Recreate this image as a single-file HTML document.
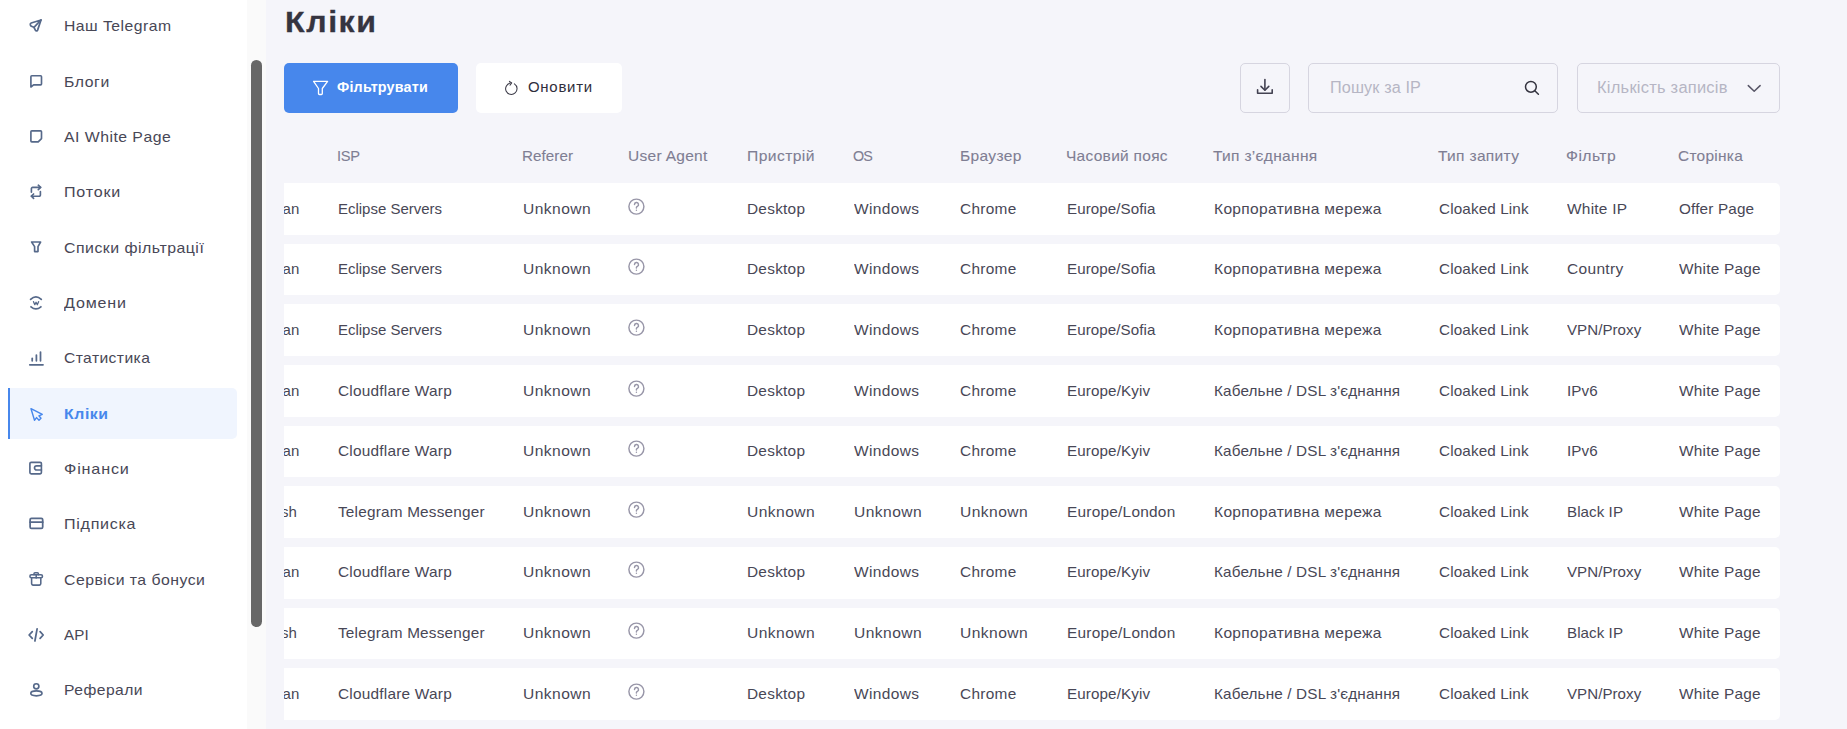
<!DOCTYPE html>
<html><head><meta charset="utf-8"><style>
html,body{margin:0;padding:0}
body{width:1847px;height:729px;overflow:hidden;position:relative;background:#f5f5fa;font-family:"Liberation Sans", sans-serif}
.t{position:absolute;white-space:nowrap;transform-origin:0 50%}
.bx{position:absolute;border-radius:5px}
.bd{border:1px solid #d6d5e0}
#side{position:absolute;left:0;top:0;width:247px;height:729px;background:#fff}
#track{position:absolute;left:247px;top:0;width:19px;height:729px;background:#fafafa}
#thumb{position:absolute;left:4px;top:60px;width:11px;height:567px;border-radius:6px;background:#676767}
#ov{position:absolute;left:0;top:0}
</style></head><body>
<div id="side">
<div class="t" style="left:63.60px;top:18.30px;font-size:15px;line-height:15px;font-weight:400;color:#484756;letter-spacing:0.451px;transform:scaleX(1.0486);">Наш Telegram</div>
<div class="t" style="left:63.60px;top:73.63px;font-size:15px;line-height:15px;font-weight:400;color:#484756;letter-spacing:0.550px;transform:scaleX(1.0512);">Блоги</div>
<div class="t" style="left:63.60px;top:128.97px;font-size:15px;line-height:15px;font-weight:400;color:#484756;letter-spacing:0.450px;transform:scaleX(1.0534);">AI White Page</div>
<div class="t" style="left:63.60px;top:184.30px;font-size:15px;line-height:15px;font-weight:400;color:#484756;letter-spacing:0.742px;transform:scaleX(1.0707);">Потоки</div>
<div class="t" style="left:63.60px;top:239.63px;font-size:15px;line-height:15px;font-weight:400;color:#484756;letter-spacing:0.473px;transform:scaleX(1.0572);">Списки фільтрації</div>
<div class="t" style="left:63.60px;top:294.96px;font-size:15px;line-height:15px;font-weight:400;color:#484756;letter-spacing:0.800px;transform:scaleX(1.0690);">Домени</div>
<div class="t" style="left:63.60px;top:350.30px;font-size:15px;line-height:15px;font-weight:400;color:#484756;letter-spacing:0.395px;transform:scaleX(1.0432);">Статистика</div>
<div style="position:absolute;left:8px;top:388px;width:229px;height:51px;background:#f0f5fe;border-radius:0 5px 5px 0"></div>
<div style="position:absolute;left:8px;top:388px;width:2px;height:51px;background:#4787ec"></div>
<div class="t" style="left:63.60px;top:405.63px;font-size:15px;line-height:15px;font-weight:700;color:#4787ec;letter-spacing:0.563px;transform:scaleX(1.0538);">Кліки</div>
<div class="t" style="left:63.60px;top:460.96px;font-size:15px;line-height:15px;font-weight:400;color:#484756;letter-spacing:0.781px;transform:scaleX(1.0778);">Фінанси</div>
<div class="t" style="left:63.60px;top:516.30px;font-size:15px;line-height:15px;font-weight:400;color:#484756;letter-spacing:0.671px;transform:scaleX(1.0703);">Підписка</div>
<div class="t" style="left:63.60px;top:571.63px;font-size:15px;line-height:15px;font-weight:400;color:#484756;letter-spacing:0.450px;transform:scaleX(1.0538);">Сервіси та бонуси</div>
<div class="t" style="left:63.60px;top:626.96px;font-size:15px;line-height:15px;font-weight:400;color:#484756;letter-spacing:0.103px;transform:scaleX(1.0085);">API</div>
<div class="t" style="left:63.60px;top:682.30px;font-size:15px;line-height:15px;font-weight:400;color:#484756;letter-spacing:0.458px;transform:scaleX(1.0425);">Реферали</div>
</div>
<div id="track"><div id="thumb"></div></div>
<div class="t" style="left:284.50px;top:6.90px;font-size:30px;line-height:30px;font-weight:700;color:#353440;letter-spacing:1.479px;transform:scaleX(1.0695);-webkit-text-stroke:0.3px #353440;">Кліки</div>
<div class="bx" style="left:284px;top:63px;width:174px;height:50px;background:#4787ec"></div>
<div class="t" style="left:336.50px;top:80.20px;font-size:14px;line-height:14px;font-weight:700;color:#ffffff;letter-spacing:0.200px;transform:scaleX(1.0225);">Фільтрувати</div>
<div class="bx" style="left:476px;top:63px;width:146px;height:50px;background:#fff"></div>
<div class="t" style="left:527.90px;top:80.20px;font-size:14px;line-height:14px;font-weight:400;color:#2f2e3b;letter-spacing:0.683px;transform:scaleX(1.0683);">Оновити</div>
<div class="bx bd" style="left:1240px;top:63px;width:48px;height:48px"></div>
<div class="bx bd" style="left:1308px;top:63px;width:248px;height:48px"></div>
<div class="t" style="left:1329.60px;top:79.60px;font-size:16px;line-height:16px;font-weight:400;color:#b6b5c4;letter-spacing:0.121px;transform:scaleX(1.0135);">Пошук за IP</div>
<div class="bx bd" style="left:1577px;top:63px;width:201px;height:48px"></div>
<div class="t" style="left:1597.30px;top:79.60px;font-size:16px;line-height:16px;font-weight:400;color:#b6b5c4;letter-spacing:0.231px;transform:scaleX(1.0291);">Кількість записів</div>
<div class="t" style="left:337.30px;top:148.40px;font-size:15px;line-height:15px;font-weight:400;color:#7f7e93;letter-spacing:-0.297px;transform:scaleX(0.9748);-webkit-text-stroke:0.1px #7f7e93;">ISP</div>
<div class="t" style="left:522.30px;top:148.40px;font-size:15px;line-height:15px;font-weight:400;color:#7f7e93;letter-spacing:0.081px;transform:scaleX(1.0096);-webkit-text-stroke:0.1px #7f7e93;">Referer</div>
<div class="t" style="left:628.30px;top:148.40px;font-size:15px;line-height:15px;font-weight:400;color:#7f7e93;letter-spacing:0.282px;transform:scaleX(1.0331);-webkit-text-stroke:0.1px #7f7e93;">User Agent</div>
<div class="t" style="left:746.60px;top:148.40px;font-size:15px;line-height:15px;font-weight:400;color:#7f7e93;letter-spacing:0.397px;transform:scaleX(1.0430);-webkit-text-stroke:0.1px #7f7e93;">Пристрій</div>
<div class="t" style="left:852.80px;top:148.40px;font-size:15px;line-height:15px;font-weight:400;color:#7f7e93;letter-spacing:-0.944px;transform:scaleX(0.9545);-webkit-text-stroke:0.1px #7f7e93;">OS</div>
<div class="t" style="left:959.50px;top:148.40px;font-size:15px;line-height:15px;font-weight:400;color:#7f7e93;letter-spacing:0.345px;transform:scaleX(1.0348);-webkit-text-stroke:0.1px #7f7e93;">Браузер</div>
<div class="t" style="left:1065.80px;top:148.40px;font-size:15px;line-height:15px;font-weight:400;color:#7f7e93;letter-spacing:0.284px;transform:scaleX(1.0318);-webkit-text-stroke:0.1px #7f7e93;">Часовий пояс</div>
<div class="t" style="left:1213.30px;top:148.40px;font-size:15px;line-height:15px;font-weight:400;color:#7f7e93;letter-spacing:0.295px;transform:scaleX(1.0352);-webkit-text-stroke:0.1px #7f7e93;">Тип з’єднання</div>
<div class="t" style="left:1438.30px;top:148.40px;font-size:15px;line-height:15px;font-weight:400;color:#7f7e93;letter-spacing:0.303px;transform:scaleX(1.0349);-webkit-text-stroke:0.1px #7f7e93;">Тип запиту</div>
<div class="t" style="left:1565.80px;top:148.40px;font-size:15px;line-height:15px;font-weight:400;color:#7f7e93;letter-spacing:0.434px;transform:scaleX(1.0457);-webkit-text-stroke:0.1px #7f7e93;">Фільтр</div>
<div class="t" style="left:1677.90px;top:148.40px;font-size:15px;line-height:15px;font-weight:400;color:#7f7e93;letter-spacing:0.266px;transform:scaleX(1.0296);-webkit-text-stroke:0.1px #7f7e93;">Сторінка</div>
<div style="position:absolute;left:284px;top:183.00px;width:1496px;height:51.7px;background:#fff;border-radius:0 5px 5px 0"></div>
<div style="position:absolute;left:284px;top:183.00px;width:30px;height:51.7px;overflow:hidden"><div class="t" style="left:-1.40px;top:18.00px;font-size:15px;line-height:15px;font-weight:400;color:#484756;">an</div></div>
<div class="t" style="left:338.00px;top:201.00px;font-size:15px;line-height:15px;font-weight:400;color:#484756;letter-spacing:-0.007px;transform:scaleX(0.9990);">Eclipse Servers</div>
<div class="t" style="left:523.00px;top:201.00px;font-size:15px;line-height:15px;font-weight:400;color:#484756;letter-spacing:0.421px;transform:scaleX(1.0388);">Unknown</div>
<div class="t" style="left:747.30px;top:201.00px;font-size:15px;line-height:15px;font-weight:400;color:#484756;letter-spacing:0.247px;transform:scaleX(1.0263);">Desktop</div>
<div class="t" style="left:853.50px;top:201.00px;font-size:15px;line-height:15px;font-weight:400;color:#484756;letter-spacing:0.345px;transform:scaleX(1.0329);">Windows</div>
<div class="t" style="left:960.20px;top:201.00px;font-size:15px;line-height:15px;font-weight:400;color:#484756;letter-spacing:0.294px;transform:scaleX(1.0268);">Chrome</div>
<div class="t" style="left:1066.50px;top:201.00px;font-size:15px;line-height:15px;font-weight:400;color:#484756;letter-spacing:0.076px;transform:scaleX(1.0095);">Europe/Sofia</div>
<div class="t" style="left:1214.00px;top:201.00px;font-size:15px;line-height:15px;font-weight:400;color:#484756;letter-spacing:0.322px;transform:scaleX(1.0359);">Корпоративна мережа</div>
<div class="t" style="left:1439.00px;top:201.00px;font-size:15px;line-height:15px;font-weight:400;color:#484756;letter-spacing:0.131px;transform:scaleX(1.0163);">Cloaked Link</div>
<div class="t" style="left:1566.50px;top:201.00px;font-size:15px;line-height:15px;font-weight:400;color:#484756;letter-spacing:0.237px;transform:scaleX(1.0284);">White IP</div>
<div class="t" style="left:1678.60px;top:201.00px;font-size:15px;line-height:15px;font-weight:400;color:#484756;letter-spacing:0.157px;transform:scaleX(1.0191);">Offer Page</div>
<div style="position:absolute;left:284px;top:243.65px;width:1496px;height:51.7px;background:#fff;border-radius:0 5px 5px 0"></div>
<div style="position:absolute;left:284px;top:243.65px;width:30px;height:51.7px;overflow:hidden"><div class="t" style="left:-1.40px;top:17.35px;font-size:15px;line-height:15px;font-weight:400;color:#484756;">an</div></div>
<div class="t" style="left:338.00px;top:261.00px;font-size:15px;line-height:15px;font-weight:400;color:#484756;letter-spacing:-0.007px;transform:scaleX(0.9990);">Eclipse Servers</div>
<div class="t" style="left:523.00px;top:261.00px;font-size:15px;line-height:15px;font-weight:400;color:#484756;letter-spacing:0.421px;transform:scaleX(1.0388);">Unknown</div>
<div class="t" style="left:747.30px;top:261.00px;font-size:15px;line-height:15px;font-weight:400;color:#484756;letter-spacing:0.247px;transform:scaleX(1.0263);">Desktop</div>
<div class="t" style="left:853.50px;top:261.00px;font-size:15px;line-height:15px;font-weight:400;color:#484756;letter-spacing:0.345px;transform:scaleX(1.0329);">Windows</div>
<div class="t" style="left:960.20px;top:261.00px;font-size:15px;line-height:15px;font-weight:400;color:#484756;letter-spacing:0.294px;transform:scaleX(1.0268);">Chrome</div>
<div class="t" style="left:1066.50px;top:261.00px;font-size:15px;line-height:15px;font-weight:400;color:#484756;letter-spacing:0.076px;transform:scaleX(1.0095);">Europe/Sofia</div>
<div class="t" style="left:1214.00px;top:261.00px;font-size:15px;line-height:15px;font-weight:400;color:#484756;letter-spacing:0.322px;transform:scaleX(1.0359);">Корпоративна мережа</div>
<div class="t" style="left:1439.00px;top:261.00px;font-size:15px;line-height:15px;font-weight:400;color:#484756;letter-spacing:0.131px;transform:scaleX(1.0163);">Cloaked Link</div>
<div class="t" style="left:1566.50px;top:261.00px;font-size:15px;line-height:15px;font-weight:400;color:#484756;letter-spacing:0.306px;transform:scaleX(1.0337);">Country</div>
<div class="t" style="left:1678.60px;top:261.00px;font-size:15px;line-height:15px;font-weight:400;color:#484756;letter-spacing:0.225px;transform:scaleX(1.0255);">White Page</div>
<div style="position:absolute;left:284px;top:304.30px;width:1496px;height:51.7px;background:#fff;border-radius:0 5px 5px 0"></div>
<div style="position:absolute;left:284px;top:304.30px;width:30px;height:51.7px;overflow:hidden"><div class="t" style="left:-1.40px;top:17.70px;font-size:15px;line-height:15px;font-weight:400;color:#484756;">an</div></div>
<div class="t" style="left:338.00px;top:322.00px;font-size:15px;line-height:15px;font-weight:400;color:#484756;letter-spacing:-0.007px;transform:scaleX(0.9990);">Eclipse Servers</div>
<div class="t" style="left:523.00px;top:322.00px;font-size:15px;line-height:15px;font-weight:400;color:#484756;letter-spacing:0.421px;transform:scaleX(1.0388);">Unknown</div>
<div class="t" style="left:747.30px;top:322.00px;font-size:15px;line-height:15px;font-weight:400;color:#484756;letter-spacing:0.247px;transform:scaleX(1.0263);">Desktop</div>
<div class="t" style="left:853.50px;top:322.00px;font-size:15px;line-height:15px;font-weight:400;color:#484756;letter-spacing:0.345px;transform:scaleX(1.0329);">Windows</div>
<div class="t" style="left:960.20px;top:322.00px;font-size:15px;line-height:15px;font-weight:400;color:#484756;letter-spacing:0.294px;transform:scaleX(1.0268);">Chrome</div>
<div class="t" style="left:1066.50px;top:322.00px;font-size:15px;line-height:15px;font-weight:400;color:#484756;letter-spacing:0.076px;transform:scaleX(1.0095);">Europe/Sofia</div>
<div class="t" style="left:1214.00px;top:322.00px;font-size:15px;line-height:15px;font-weight:400;color:#484756;letter-spacing:0.322px;transform:scaleX(1.0359);">Корпоративна мережа</div>
<div class="t" style="left:1439.00px;top:322.00px;font-size:15px;line-height:15px;font-weight:400;color:#484756;letter-spacing:0.131px;transform:scaleX(1.0163);">Cloaked Link</div>
<div class="t" style="left:1566.50px;top:322.00px;font-size:15px;line-height:15px;font-weight:400;color:#484756;letter-spacing:0.053px;transform:scaleX(1.0057);">VPN/Proxy</div>
<div class="t" style="left:1678.60px;top:322.00px;font-size:15px;line-height:15px;font-weight:400;color:#484756;letter-spacing:0.225px;transform:scaleX(1.0255);">White Page</div>
<div style="position:absolute;left:284px;top:364.95px;width:1496px;height:51.7px;background:#fff;border-radius:0 5px 5px 0"></div>
<div style="position:absolute;left:284px;top:364.95px;width:30px;height:51.7px;overflow:hidden"><div class="t" style="left:-1.40px;top:18.05px;font-size:15px;line-height:15px;font-weight:400;color:#484756;">an</div></div>
<div class="t" style="left:338.00px;top:383.00px;font-size:15px;line-height:15px;font-weight:400;color:#484756;letter-spacing:0.210px;transform:scaleX(1.0265);">Cloudflare Warp</div>
<div class="t" style="left:523.00px;top:383.00px;font-size:15px;line-height:15px;font-weight:400;color:#484756;letter-spacing:0.421px;transform:scaleX(1.0388);">Unknown</div>
<div class="t" style="left:747.30px;top:383.00px;font-size:15px;line-height:15px;font-weight:400;color:#484756;letter-spacing:0.247px;transform:scaleX(1.0263);">Desktop</div>
<div class="t" style="left:853.50px;top:383.00px;font-size:15px;line-height:15px;font-weight:400;color:#484756;letter-spacing:0.345px;transform:scaleX(1.0329);">Windows</div>
<div class="t" style="left:960.20px;top:383.00px;font-size:15px;line-height:15px;font-weight:400;color:#484756;letter-spacing:0.294px;transform:scaleX(1.0268);">Chrome</div>
<div class="t" style="left:1066.50px;top:383.00px;font-size:15px;line-height:15px;font-weight:400;color:#484756;letter-spacing:0.106px;transform:scaleX(1.0130);">Europe/Kyiv</div>
<div class="t" style="left:1214.00px;top:383.00px;font-size:15px;line-height:15px;font-weight:400;color:#484756;letter-spacing:0.146px;transform:scaleX(1.0183);">Кабельне / DSL з'єднання</div>
<div class="t" style="left:1439.00px;top:383.00px;font-size:15px;line-height:15px;font-weight:400;color:#484756;letter-spacing:0.131px;transform:scaleX(1.0163);">Cloaked Link</div>
<div class="t" style="left:1566.50px;top:383.00px;font-size:15px;line-height:15px;font-weight:400;color:#484756;letter-spacing:0.131px;transform:scaleX(1.0129);">IPv6</div>
<div class="t" style="left:1678.60px;top:383.00px;font-size:15px;line-height:15px;font-weight:400;color:#484756;letter-spacing:0.225px;transform:scaleX(1.0255);">White Page</div>
<div style="position:absolute;left:284px;top:425.60px;width:1496px;height:51.7px;background:#fff;border-radius:0 5px 5px 0"></div>
<div style="position:absolute;left:284px;top:425.60px;width:30px;height:51.7px;overflow:hidden"><div class="t" style="left:-1.40px;top:17.40px;font-size:15px;line-height:15px;font-weight:400;color:#484756;">an</div></div>
<div class="t" style="left:338.00px;top:443.00px;font-size:15px;line-height:15px;font-weight:400;color:#484756;letter-spacing:0.210px;transform:scaleX(1.0265);">Cloudflare Warp</div>
<div class="t" style="left:523.00px;top:443.00px;font-size:15px;line-height:15px;font-weight:400;color:#484756;letter-spacing:0.421px;transform:scaleX(1.0388);">Unknown</div>
<div class="t" style="left:747.30px;top:443.00px;font-size:15px;line-height:15px;font-weight:400;color:#484756;letter-spacing:0.247px;transform:scaleX(1.0263);">Desktop</div>
<div class="t" style="left:853.50px;top:443.00px;font-size:15px;line-height:15px;font-weight:400;color:#484756;letter-spacing:0.345px;transform:scaleX(1.0329);">Windows</div>
<div class="t" style="left:960.20px;top:443.00px;font-size:15px;line-height:15px;font-weight:400;color:#484756;letter-spacing:0.294px;transform:scaleX(1.0268);">Chrome</div>
<div class="t" style="left:1066.50px;top:443.00px;font-size:15px;line-height:15px;font-weight:400;color:#484756;letter-spacing:0.106px;transform:scaleX(1.0130);">Europe/Kyiv</div>
<div class="t" style="left:1214.00px;top:443.00px;font-size:15px;line-height:15px;font-weight:400;color:#484756;letter-spacing:0.146px;transform:scaleX(1.0183);">Кабельне / DSL з'єднання</div>
<div class="t" style="left:1439.00px;top:443.00px;font-size:15px;line-height:15px;font-weight:400;color:#484756;letter-spacing:0.131px;transform:scaleX(1.0163);">Cloaked Link</div>
<div class="t" style="left:1566.50px;top:443.00px;font-size:15px;line-height:15px;font-weight:400;color:#484756;letter-spacing:0.131px;transform:scaleX(1.0129);">IPv6</div>
<div class="t" style="left:1678.60px;top:443.00px;font-size:15px;line-height:15px;font-weight:400;color:#484756;letter-spacing:0.225px;transform:scaleX(1.0255);">White Page</div>
<div style="position:absolute;left:284px;top:486.25px;width:1496px;height:51.7px;background:#fff;border-radius:0 5px 5px 0"></div>
<div style="position:absolute;left:284px;top:486.25px;width:30px;height:51.7px;overflow:hidden"><div class="t" style="left:-3.00px;top:17.75px;font-size:15px;line-height:15px;font-weight:400;color:#484756;">sh</div></div>
<div class="t" style="left:338.00px;top:504.00px;font-size:15px;line-height:15px;font-weight:400;color:#484756;letter-spacing:0.192px;transform:scaleX(1.0228);">Telegram Messenger</div>
<div class="t" style="left:523.00px;top:504.00px;font-size:15px;line-height:15px;font-weight:400;color:#484756;letter-spacing:0.421px;transform:scaleX(1.0388);">Unknown</div>
<div class="t" style="left:747.30px;top:504.00px;font-size:15px;line-height:15px;font-weight:400;color:#484756;letter-spacing:0.421px;transform:scaleX(1.0388);">Unknown</div>
<div class="t" style="left:853.50px;top:504.00px;font-size:15px;line-height:15px;font-weight:400;color:#484756;letter-spacing:0.421px;transform:scaleX(1.0388);">Unknown</div>
<div class="t" style="left:960.20px;top:504.00px;font-size:15px;line-height:15px;font-weight:400;color:#484756;letter-spacing:0.421px;transform:scaleX(1.0388);">Unknown</div>
<div class="t" style="left:1066.50px;top:504.00px;font-size:15px;line-height:15px;font-weight:400;color:#484756;letter-spacing:0.234px;transform:scaleX(1.0266);">Europe/London</div>
<div class="t" style="left:1214.00px;top:504.00px;font-size:15px;line-height:15px;font-weight:400;color:#484756;letter-spacing:0.322px;transform:scaleX(1.0359);">Корпоративна мережа</div>
<div class="t" style="left:1439.00px;top:504.00px;font-size:15px;line-height:15px;font-weight:400;color:#484756;letter-spacing:0.131px;transform:scaleX(1.0163);">Cloaked Link</div>
<div class="t" style="left:1566.50px;top:504.00px;font-size:15px;line-height:15px;font-weight:400;color:#484756;letter-spacing:0.069px;transform:scaleX(1.0087);">Black IP</div>
<div class="t" style="left:1678.60px;top:504.00px;font-size:15px;line-height:15px;font-weight:400;color:#484756;letter-spacing:0.225px;transform:scaleX(1.0255);">White Page</div>
<div style="position:absolute;left:284px;top:546.90px;width:1496px;height:51.7px;background:#fff;border-radius:0 5px 5px 0"></div>
<div style="position:absolute;left:284px;top:546.90px;width:30px;height:51.7px;overflow:hidden"><div class="t" style="left:-1.40px;top:17.10px;font-size:15px;line-height:15px;font-weight:400;color:#484756;">an</div></div>
<div class="t" style="left:338.00px;top:564.00px;font-size:15px;line-height:15px;font-weight:400;color:#484756;letter-spacing:0.210px;transform:scaleX(1.0265);">Cloudflare Warp</div>
<div class="t" style="left:523.00px;top:564.00px;font-size:15px;line-height:15px;font-weight:400;color:#484756;letter-spacing:0.421px;transform:scaleX(1.0388);">Unknown</div>
<div class="t" style="left:747.30px;top:564.00px;font-size:15px;line-height:15px;font-weight:400;color:#484756;letter-spacing:0.247px;transform:scaleX(1.0263);">Desktop</div>
<div class="t" style="left:853.50px;top:564.00px;font-size:15px;line-height:15px;font-weight:400;color:#484756;letter-spacing:0.345px;transform:scaleX(1.0329);">Windows</div>
<div class="t" style="left:960.20px;top:564.00px;font-size:15px;line-height:15px;font-weight:400;color:#484756;letter-spacing:0.294px;transform:scaleX(1.0268);">Chrome</div>
<div class="t" style="left:1066.50px;top:564.00px;font-size:15px;line-height:15px;font-weight:400;color:#484756;letter-spacing:0.106px;transform:scaleX(1.0130);">Europe/Kyiv</div>
<div class="t" style="left:1214.00px;top:564.00px;font-size:15px;line-height:15px;font-weight:400;color:#484756;letter-spacing:0.146px;transform:scaleX(1.0183);">Кабельне / DSL з'єднання</div>
<div class="t" style="left:1439.00px;top:564.00px;font-size:15px;line-height:15px;font-weight:400;color:#484756;letter-spacing:0.131px;transform:scaleX(1.0163);">Cloaked Link</div>
<div class="t" style="left:1566.50px;top:564.00px;font-size:15px;line-height:15px;font-weight:400;color:#484756;letter-spacing:0.053px;transform:scaleX(1.0057);">VPN/Proxy</div>
<div class="t" style="left:1678.60px;top:564.00px;font-size:15px;line-height:15px;font-weight:400;color:#484756;letter-spacing:0.225px;transform:scaleX(1.0255);">White Page</div>
<div style="position:absolute;left:284px;top:607.55px;width:1496px;height:51.7px;background:#fff;border-radius:0 5px 5px 0"></div>
<div style="position:absolute;left:284px;top:607.55px;width:30px;height:51.7px;overflow:hidden"><div class="t" style="left:-3.00px;top:17.45px;font-size:15px;line-height:15px;font-weight:400;color:#484756;">sh</div></div>
<div class="t" style="left:338.00px;top:625.00px;font-size:15px;line-height:15px;font-weight:400;color:#484756;letter-spacing:0.192px;transform:scaleX(1.0228);">Telegram Messenger</div>
<div class="t" style="left:523.00px;top:625.00px;font-size:15px;line-height:15px;font-weight:400;color:#484756;letter-spacing:0.421px;transform:scaleX(1.0388);">Unknown</div>
<div class="t" style="left:747.30px;top:625.00px;font-size:15px;line-height:15px;font-weight:400;color:#484756;letter-spacing:0.421px;transform:scaleX(1.0388);">Unknown</div>
<div class="t" style="left:853.50px;top:625.00px;font-size:15px;line-height:15px;font-weight:400;color:#484756;letter-spacing:0.421px;transform:scaleX(1.0388);">Unknown</div>
<div class="t" style="left:960.20px;top:625.00px;font-size:15px;line-height:15px;font-weight:400;color:#484756;letter-spacing:0.421px;transform:scaleX(1.0388);">Unknown</div>
<div class="t" style="left:1066.50px;top:625.00px;font-size:15px;line-height:15px;font-weight:400;color:#484756;letter-spacing:0.234px;transform:scaleX(1.0266);">Europe/London</div>
<div class="t" style="left:1214.00px;top:625.00px;font-size:15px;line-height:15px;font-weight:400;color:#484756;letter-spacing:0.322px;transform:scaleX(1.0359);">Корпоративна мережа</div>
<div class="t" style="left:1439.00px;top:625.00px;font-size:15px;line-height:15px;font-weight:400;color:#484756;letter-spacing:0.131px;transform:scaleX(1.0163);">Cloaked Link</div>
<div class="t" style="left:1566.50px;top:625.00px;font-size:15px;line-height:15px;font-weight:400;color:#484756;letter-spacing:0.069px;transform:scaleX(1.0087);">Black IP</div>
<div class="t" style="left:1678.60px;top:625.00px;font-size:15px;line-height:15px;font-weight:400;color:#484756;letter-spacing:0.225px;transform:scaleX(1.0255);">White Page</div>
<div style="position:absolute;left:284px;top:668.20px;width:1496px;height:51.7px;background:#fff;border-radius:0 5px 5px 0"></div>
<div style="position:absolute;left:284px;top:668.20px;width:30px;height:51.7px;overflow:hidden"><div class="t" style="left:-1.40px;top:17.80px;font-size:15px;line-height:15px;font-weight:400;color:#484756;">an</div></div>
<div class="t" style="left:338.00px;top:686.00px;font-size:15px;line-height:15px;font-weight:400;color:#484756;letter-spacing:0.210px;transform:scaleX(1.0265);">Cloudflare Warp</div>
<div class="t" style="left:523.00px;top:686.00px;font-size:15px;line-height:15px;font-weight:400;color:#484756;letter-spacing:0.421px;transform:scaleX(1.0388);">Unknown</div>
<div class="t" style="left:747.30px;top:686.00px;font-size:15px;line-height:15px;font-weight:400;color:#484756;letter-spacing:0.247px;transform:scaleX(1.0263);">Desktop</div>
<div class="t" style="left:853.50px;top:686.00px;font-size:15px;line-height:15px;font-weight:400;color:#484756;letter-spacing:0.345px;transform:scaleX(1.0329);">Windows</div>
<div class="t" style="left:960.20px;top:686.00px;font-size:15px;line-height:15px;font-weight:400;color:#484756;letter-spacing:0.294px;transform:scaleX(1.0268);">Chrome</div>
<div class="t" style="left:1066.50px;top:686.00px;font-size:15px;line-height:15px;font-weight:400;color:#484756;letter-spacing:0.106px;transform:scaleX(1.0130);">Europe/Kyiv</div>
<div class="t" style="left:1214.00px;top:686.00px;font-size:15px;line-height:15px;font-weight:400;color:#484756;letter-spacing:0.146px;transform:scaleX(1.0183);">Кабельне / DSL з'єднання</div>
<div class="t" style="left:1439.00px;top:686.00px;font-size:15px;line-height:15px;font-weight:400;color:#484756;letter-spacing:0.131px;transform:scaleX(1.0163);">Cloaked Link</div>
<div class="t" style="left:1566.50px;top:686.00px;font-size:15px;line-height:15px;font-weight:400;color:#484756;letter-spacing:0.053px;transform:scaleX(1.0057);">VPN/Proxy</div>
<div class="t" style="left:1678.60px;top:686.00px;font-size:15px;line-height:15px;font-weight:400;color:#484756;letter-spacing:0.225px;transform:scaleX(1.0255);">White Page</div>
<svg id="ov" width="1847" height="729" viewBox="0 0 1847 729">
<g fill="none" stroke="#56698a" stroke-width="1.75" stroke-linecap="round" stroke-linejoin="round" ><path d="M41 20 L31.2 23 Q30.1 23.4 30.3 24.5 L30.5 25.2 Q30.7 25.9 31.4 26.2 L33.9 27.3 L35.4 30.2 Q35.9 31 36.7 30.9 Q37.3 30.8 37.6 30.1 Z"/><path d="M41 20 L34.2 27.1"/></g>
<g fill="none" stroke="#56698a" stroke-width="1.65" stroke-linecap="round" stroke-linejoin="round" ><path d="M30.9 87 V76.7 a.9 .9 0 0 1 .9 -.9 H40.6 a.9 .9 0 0 1 .9 .9 V84 a.9 .9 0 0 1 -.9 .9 H33.6 Z"/></g>
<g fill="none" stroke="#56698a" stroke-width="1.65" stroke-linecap="round" stroke-linejoin="round" ><path d="M31.8 130.9 H40.6 a.9 .9 0 0 1 .9 .9 V138.6 L38.2 141.8 H31.8 a.9 .9 0 0 1 -.9 -.9 V131.8 a.9 .9 0 0 1 .9 -.9 Z"/></g>
<g fill="none" stroke="#56698a" stroke-width="1.65" stroke-linecap="round" stroke-linejoin="round" ><path d="M31.4 192.2 V188.6 a1.2 1.2 0 0 1 1.2 -1.2 H40.6"/><path d="M38.3 185.2 L40.6 187.4 L38.3 189.6"/><path d="M40.4 191.6 V195 a1.2 1.2 0 0 1 -1.2 1.2 H31.4"/><path d="M33.6 194 L31.4 196.2 L33.6 198.4"/></g>
<g fill="none" stroke="#56698a" stroke-width="1.65" stroke-linecap="round" stroke-linejoin="round" ><path d="M31.6 242 H40.6 L38 246.6 V251.6 H34.6 V246.6 Z"/></g>
<g fill="none" stroke="#56698a" stroke-width="1.75" stroke-linecap="round" stroke-linejoin="round" ><path d="M30.6 299.4 Q35.9 294.2 41.3 299.4"/><path d="M31 306.8 Q35.9 311 40.9 306.8"/></g>
<g fill="none" stroke="#56698a" stroke-width="1.3" stroke-linecap="round" stroke-linejoin="round" stroke-linejoin="miter"><path d="M33.5 301.7 L34.8 304.7 L36.05 302.3 L37.3 304.7 L38.6 301.7"/></g>
<g fill="none" stroke="#56698a" stroke-width="1.75" stroke-linecap="round" stroke-linejoin="round" ><path d="M29.8 364.8 H43"/><path d="M32.2 358.4 V360.8"/><path d="M36.4 355 V360.8"/><path d="M40.5 352 V360.8"/></g>
<g fill="none" stroke="#4787ec" stroke-width="1.4" stroke-linecap="round" stroke-linejoin="round" ><path d="M31 408.7 L42.3 414.3 L38.9 415.8 L41 418.3 L39 420.2 L36.6 417.6 L34.5 420.3 Z"/></g>
<g fill="none" stroke="#56698a" stroke-width="1.65" stroke-linecap="round" stroke-linejoin="round" ><path d="M41.4 465.2 V463.6 a1.3 1.3 0 0 0 -1.3 -1.3 H31.2 a1.3 1.3 0 0 0 -1.3 1.3 V472.6 a1.3 1.3 0 0 0 1.3 1.3 H40.1 a1.3 1.3 0 0 0 1.3 -1.3 Z"/><path d="M41.4 465.8 H36.6 a2.1 2.1 0 0 0 0 4.2 H41.4"/></g>
<g fill="none" stroke="#56698a" stroke-width="1.75" stroke-linecap="round" stroke-linejoin="round" ><rect x="30.1" y="518.3" width="12.6" height="10.1" rx="1.4"/><path d="M30.1 522.2 H42.7"/></g>
<g fill="none" stroke="#56698a" stroke-width="1.55" stroke-linecap="round" stroke-linejoin="round" ><rect x="29.9" y="574.8" width="12.6" height="3" rx="1.5"/><path d="M31.6 578.2 V583.6 a1.5 1.5 0 0 0 1.5 1.5 H39.3 a1.5 1.5 0 0 0 1.5 -1.5 V578.2"/><path d="M34 574.8 V573.8 a1 1 0 0 1 1 -1 H37.4 a1 1 0 0 1 1 1 V574.8"/><path d="M36.2 574.8 V578"/></g>
<g fill="none" stroke="#56698a" stroke-width="1.75" stroke-linecap="round" stroke-linejoin="round" ><path d="M32.3 631.6 L29.1 635 L32.3 638.3"/><path d="M40.1 631.6 L43.2 635 L40.1 638.3"/><path d="M37.1 628.8 L34.9 641"/></g>
<g fill="none" stroke="#56698a" stroke-width="1.65" stroke-linecap="round" stroke-linejoin="round" ><circle cx="36.3" cy="686.3" r="2.6"/><ellipse cx="36.4" cy="693.3" rx="5.6" ry="2.5"/></g>
<g fill="none" stroke="#ffffff" stroke-width="1.3" stroke-linecap="round" stroke-linejoin="round" ><path d="M313.6 81.4 H327.6 L322.3 88.5 V93.6 a.9 .9 0 0 1 -1 .9 H319.5 a.9 .9 0 0 1 -1 -.9 V88.5 Z"/></g>
<g fill="none" stroke="#3a3946" stroke-width="1.05" stroke-linecap="round" stroke-linejoin="round" ><path d="M514.4 83.9 A5.7 5.7 0 1 1 510.3 83.1"/><path d="M509.4 81.3 L511.7 83 L510 85.1"/></g>
<g fill="none" stroke="#434252" stroke-width="1.6" stroke-linecap="round" stroke-linejoin="round" stroke-linecap="square"><path d="M1264.9 79.5 V90"/><path d="M1261 86.4 L1264.9 90.2 L1268.8 86.4"/><path d="M1257.6 89.7 V93.2 H1272.2 V89.7"/></g>
<g fill="none" stroke="#34333f" stroke-width="1.5" stroke-linecap="round" stroke-linejoin="round" ><circle cx="1530.9" cy="86.8" r="5.4"/><path d="M1534.8 90.7 L1538.4 94.3"/></g>
<g fill="none" stroke="#575566" stroke-width="1.5" stroke-linecap="round" stroke-linejoin="round" ><path d="M1748.3 85.6 L1754.2 91.2 L1760.1 85.6"/></g>
<g fill="none" stroke="#9896a8" stroke-width="1.45" stroke-linecap="round" stroke-linejoin="round" ><circle cx="636.4" cy="206.60" r="7.5"/><path d="M634.5 204.50 a2 2 0 1 1 2.9 1.8 c-.6 .3 -1 .7 -1 1.4 v.3"/><path d="M636.4 210.20 v.05"/></g>
<g fill="none" stroke="#9896a8" stroke-width="1.45" stroke-linecap="round" stroke-linejoin="round" ><circle cx="636.4" cy="266.60" r="7.5"/><path d="M634.5 264.50 a2 2 0 1 1 2.9 1.8 c-.6 .3 -1 .7 -1 1.4 v.3"/><path d="M636.4 270.20 v.05"/></g>
<g fill="none" stroke="#9896a8" stroke-width="1.45" stroke-linecap="round" stroke-linejoin="round" ><circle cx="636.4" cy="327.60" r="7.5"/><path d="M634.5 325.50 a2 2 0 1 1 2.9 1.8 c-.6 .3 -1 .7 -1 1.4 v.3"/><path d="M636.4 331.20 v.05"/></g>
<g fill="none" stroke="#9896a8" stroke-width="1.45" stroke-linecap="round" stroke-linejoin="round" ><circle cx="636.4" cy="388.60" r="7.5"/><path d="M634.5 386.50 a2 2 0 1 1 2.9 1.8 c-.6 .3 -1 .7 -1 1.4 v.3"/><path d="M636.4 392.20 v.05"/></g>
<g fill="none" stroke="#9896a8" stroke-width="1.45" stroke-linecap="round" stroke-linejoin="round" ><circle cx="636.4" cy="448.60" r="7.5"/><path d="M634.5 446.50 a2 2 0 1 1 2.9 1.8 c-.6 .3 -1 .7 -1 1.4 v.3"/><path d="M636.4 452.20 v.05"/></g>
<g fill="none" stroke="#9896a8" stroke-width="1.45" stroke-linecap="round" stroke-linejoin="round" ><circle cx="636.4" cy="509.60" r="7.5"/><path d="M634.5 507.50 a2 2 0 1 1 2.9 1.8 c-.6 .3 -1 .7 -1 1.4 v.3"/><path d="M636.4 513.20 v.05"/></g>
<g fill="none" stroke="#9896a8" stroke-width="1.45" stroke-linecap="round" stroke-linejoin="round" ><circle cx="636.4" cy="569.60" r="7.5"/><path d="M634.5 567.50 a2 2 0 1 1 2.9 1.8 c-.6 .3 -1 .7 -1 1.4 v.3"/><path d="M636.4 573.20 v.05"/></g>
<g fill="none" stroke="#9896a8" stroke-width="1.45" stroke-linecap="round" stroke-linejoin="round" ><circle cx="636.4" cy="630.60" r="7.5"/><path d="M634.5 628.50 a2 2 0 1 1 2.9 1.8 c-.6 .3 -1 .7 -1 1.4 v.3"/><path d="M636.4 634.20 v.05"/></g>
<g fill="none" stroke="#9896a8" stroke-width="1.45" stroke-linecap="round" stroke-linejoin="round" ><circle cx="636.4" cy="691.60" r="7.5"/><path d="M634.5 689.50 a2 2 0 1 1 2.9 1.8 c-.6 .3 -1 .7 -1 1.4 v.3"/><path d="M636.4 695.20 v.05"/></g>
</svg>
</body></html>
